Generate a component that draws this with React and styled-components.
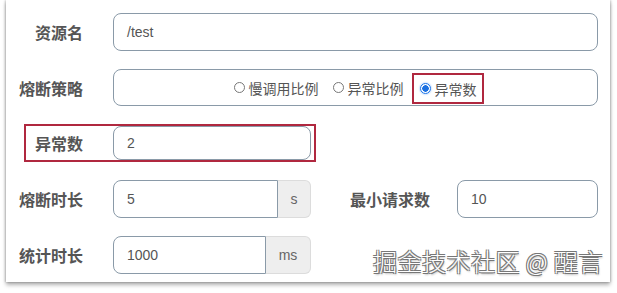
import React from "react";
import styled, { createGlobalStyle } from "styled-components";

const GlobalStyle = createGlobalStyle`
  html, body { margin: 0; padding: 0; background: #fff; }
  body { font-family: "Liberation Sans", "Noto Sans CJK SC", sans-serif; }
`;

const Page = styled.div`
  width: 617px;
  height: 293px;
  overflow: hidden;
  position: relative;
`;

const Card = styled.div`
  margin-left: 6px;
  width: 604px;
  height: 282px;
  box-sizing: border-box;
  background: #fff;
  padding: 13px 12px 0 0;
  display: flex;
  flex-direction: column;
  gap: 18px;
  box-shadow: -1px 0 2px rgba(0,0,0,0.18), 1px 0 2px rgba(0,0,0,0.18), 0 3px 4px rgba(0,0,0,0.3);
`;

const Row = styled.div`
  display: flex;
  align-items: center;
  height: ${p => p.h || 38}px;
`;

const Label = styled.div`
  width: ${p => p.w || 77}px;
  flex: none;
  text-align: right;
  font-family: "Noto Sans CJK SC", sans-serif;
  font-weight: 700;
  font-size: 16px;
  color: #555;
  margin-right: ${p => p.gap || 30}px;
`;

const Input = styled.div`
  box-sizing: border-box;
  height: 100%;
  width: ${p => (p.w ? `${p.w}px` : "auto")};
  flex: ${p => (p.w ? "none" : "1")};
  border: 1px solid ${p => p.dark ? "#8a9aa8" : "#a9aeb4"};
  border-radius: ${p => p.addon ? "8px 0 0 8px" : "8px"};
  padding-left: 13px;
  display: flex;
  align-items: center;
  font-size: 14px;
  color: #555;
  background: #fff;
`;

const Addon = styled.div`
  box-sizing: border-box;
  width: ${p => p.w}px;
  height: 100%;
  flex: none;
  background: #eeeeee;
  border: 1px solid #dcdcdc;
  border-left: none;
  border-radius: 0 6px 6px 0;
  display: flex;
  align-items: center;
  justify-content: center;
  font-size: 14px;
  color: #666;
`;

const RadioBox = styled(Input)`
  justify-content: center;
  padding-left: 0;
  padding-right: 0;
  font-family: "Noto Sans CJK SC", sans-serif;
  gap: 2px;
`;

const RadioItem = styled.label`
  box-sizing: border-box;
  display: flex;
  align-items: center;
  gap: 4px;
  font-size: 14px;
  color: #555;
  padding: ${p => p.marked ? "0 5px 0 6px" : "0 6px"};
  border: ${p => p.marked ? "2px solid #b0283f" : "none"};
  height: ${p => p.marked ? "31px" : "auto"};
  margin-top: ${p => p.marked ? "2px" : "0"};
`;

const Dot = styled.span`
  width: 11px;
  height: 11px;
  box-sizing: border-box;
  border-radius: 50%;
  border: 1px solid ${p => p.on ? "#1a73e8" : "#777"};
  background: ${p => p.on ? "radial-gradient(circle, #1a6fe0 0 3px, #fff 3.5px)" : "#fff"};
  box-shadow: ${p => p.on ? "0 0 2px #6aa7f5" : "none"};
`;

const Marked = styled.div`
  margin-left: 18px;
  width: 292px;
  height: 38px;
  box-sizing: border-box;
  border: 2px solid #b0283f;
  display: flex;
  align-items: center;
  padding: 0 3px 0 0;
`;

const Group = styled.div`
  display: flex;
  height: 100%;
  width: 198px;
  flex: none;
`;

const Watermark = styled.div`
  position: absolute;
  right: 14px;
  bottom: 15px;
  font-family: "Noto Sans CJK SC", sans-serif;
  font-size: 24px;
  font-weight: 300;
  color: #fff;
  letter-spacing: 0.5px;
  text-shadow: -1px -1px 0 #777, 1px -1px 0 #777, -1px 1px 0 #777, 1px 1px 0 #777, 1px 2px 2px rgba(0,0,0,0.3);
`;

export default function App() {
  return (
    <>
      <GlobalStyle />
      <Page>
        <Card>
          <Row>
            <Label>资源名</Label>
            <Input dark>/test</Input>
          </Row>
          <Row h={37}>
            <Label>熔断策略</Label>
            <RadioBox dark>
              <RadioItem><Dot />慢调用比例</RadioItem>
              <RadioItem><Dot />异常比例</RadioItem>
              <RadioItem marked><Dot on />异常数</RadioItem>
            </RadioBox>
          </Row>
          <Marked>
            <Label w={57}>异常数</Label>
            <Input dark>2</Input>
          </Marked>
          <Row>
            <Label>熔断时长</Label>
            <Group>
              <Input addon dark>5</Input>
              <Addon w={33}>s</Addon>
            </Group>
            <Label w={119} gap={27}>最小请求数</Label>
            <Input dark>10</Input>
          </Row>
          <Row>
            <Label>统计时长</Label>
            <Group>
              <Input addon dark>1000</Input>
              <Addon w={45}>ms</Addon>
            </Group>
          </Row>
        </Card>
        <Watermark>掘金技术社区 @ 醒言</Watermark>
      </Page>
    </>
  );
}
